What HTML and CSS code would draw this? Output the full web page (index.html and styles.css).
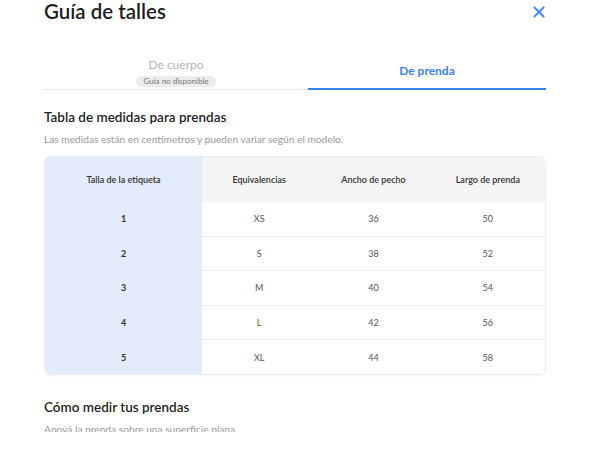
FILE: index.html
```html
<!DOCTYPE html>
<html lang="es">
<head>
<meta charset="utf-8">
<link rel="stylesheet" href="styles.css">
</head>
<body>
<div class="modal">
  <div class="scroll">
    <header class="head">
      <h1 class="title">Guía de talles</h1>
      <button class="close" aria-label="Cerrar">
        <svg width="12" height="12" viewBox="0 0 12 12"><path d="M1.5 1.5 L10.5 10.5 M10.5 1.5 L1.5 10.5" stroke="#3483fa" stroke-width="1.8" stroke-linecap="square"/></svg>
      </button>
    </header>
    <nav class="tabs">
      <div class="tab tab-off">
        <span class="tab-label">De cuerpo</span>
        <span class="badge">Guía no disponible</span>
      </div>
      <div class="tab tab-on">
        <span class="tab-label">De prenda</span>
      </div>
    </nav>
    <section class="sec">
      <h2 class="sec-title">Tabla de medidas para prendas</h2>
      <p class="sec-sub">Las medidas están en centímetros y pueden variar según el modelo.</p>
      <div class="table">
        <div class="col col-main">
          <div class="cell hcell">Talla de la etiqueta</div>
          <div class="cell bold">1</div>
          <div class="cell bold">2</div>
          <div class="cell bold">3</div>
          <div class="cell bold">4</div>
          <div class="cell bold">5</div>
        </div>
        <div class="col">
          <div class="cell hcell">Equivalencias</div>
          <div class="cell">XS</div>
          <div class="cell">S</div>
          <div class="cell">M</div>
          <div class="cell">L</div>
          <div class="cell">XL</div>
        </div>
        <div class="col">
          <div class="cell hcell">Ancho de pecho</div>
          <div class="cell">36</div>
          <div class="cell">38</div>
          <div class="cell">40</div>
          <div class="cell">42</div>
          <div class="cell">44</div>
        </div>
        <div class="col">
          <div class="cell hcell">Largo de prenda</div>
          <div class="cell">50</div>
          <div class="cell">52</div>
          <div class="cell">54</div>
          <div class="cell">56</div>
          <div class="cell">58</div>
        </div>
      </div>
    </section>
    <section class="sec sec2">
      <h2 class="sec-title">Cómo medir tus prendas</h2>
      <p class="sec-sub2">Apoyá la prenda sobre una superficie plana.</p>
    </section>
  </div>
</div>
</body>
</html>
```
FILE: styles.css
```css
* { box-sizing: border-box; }
html, body { margin: 0; padding: 0; background: #fff; }
body {
  font-family: "Lato", "Noto Sans", sans-serif;
  color: #333;
  width: 600px;
  height: 455px;
  overflow: hidden;
}
.modal { width: 600px; height: 455px; background: #fff; }
.scroll {
  height: 432px;
  overflow: hidden;
  padding: 0 54px 0 44px;
}
.head {
  display: flex;
  justify-content: space-between;
  align-items: center;
  height: 22px;
}
.title {
  margin: 0;
  font-size: 20.5px;
  font-weight: 600;
  color: rgba(0,0,0,.9);
  line-height: 22px;
}
.close {
  border: 0;
  background: none;
  padding: 0;
  width: 14px;
  height: 14px;
  display: flex;
  align-items: center;
  justify-content: center;
  margin-top: 1px;
}
.tabs {
  display: grid;
  grid-template-columns: 264px 1fr;
  margin-top: 32px;
  border-bottom: 1px solid #e6e6e6;
  height: 36px;
}
.tab {
  display: flex;
  flex-direction: column;
  align-items: center;
  justify-content: center;
}
.tab-label { font-size: 12px; line-height: 14px; }
.tab-off { justify-content: flex-start; padding-top: 4px; }
.tab-off .tab-label { color: #b3b3b3; }
.badge {
  margin-top: 4px;
  background: #ededed;
  color: #737373;
  font-size: 8px;
  line-height: 11px;
  padding: 0 7px;
  border-radius: 6px;
}
.tab-on {
  border-bottom: 2px solid #3483fa;
  margin-bottom: -1px;
}
.tab-on .tab-label { color: #3483fa; font-weight: 700; }
.sec { margin-top: 18px; }
.sec-title {
  margin: 0;
  font-size: 13.5px;
  font-weight: 600;
  color: rgba(0,0,0,.9);
  line-height: 18px;
}
.sec-sub {
  margin: 6px 0 0;
  font-size: 10.2px;
  line-height: 14px;
  color: #999;
}
.table {
  margin-top: 10px;
  display: grid;
  grid-template-columns: 157px 1fr 1fr 1fr;
  border: 1px solid #ececec;
  border-radius: 6px;
  overflow: hidden;
  box-shadow: 0 1px 2px rgba(0,0,0,.04);
}
.col { display: flex; flex-direction: column; }
.col-main { background: #e3ecfb; }
.cell {
  height: 34.6px;
  display: flex;
  align-items: center;
  justify-content: center;
  font-size: 9px;
  color: #555;
  border-top: 1px solid #efefef;
}
.col-main .cell { border-top-color: transparent; }
.hcell {
  height: 44px;
  border-top: 0;
  background: #f5f5f5;
  font-weight: 600;
  color: #333;
}
.col-main .hcell { background: transparent; }
.bold { font-weight: 700; color: #333; }
.sec2 { margin-top: 23px; }
.sec-sub2 {
  margin: 6px 0 0;
  font-size: 10.2px;
  line-height: 14px;
  color: #999;
}
```
